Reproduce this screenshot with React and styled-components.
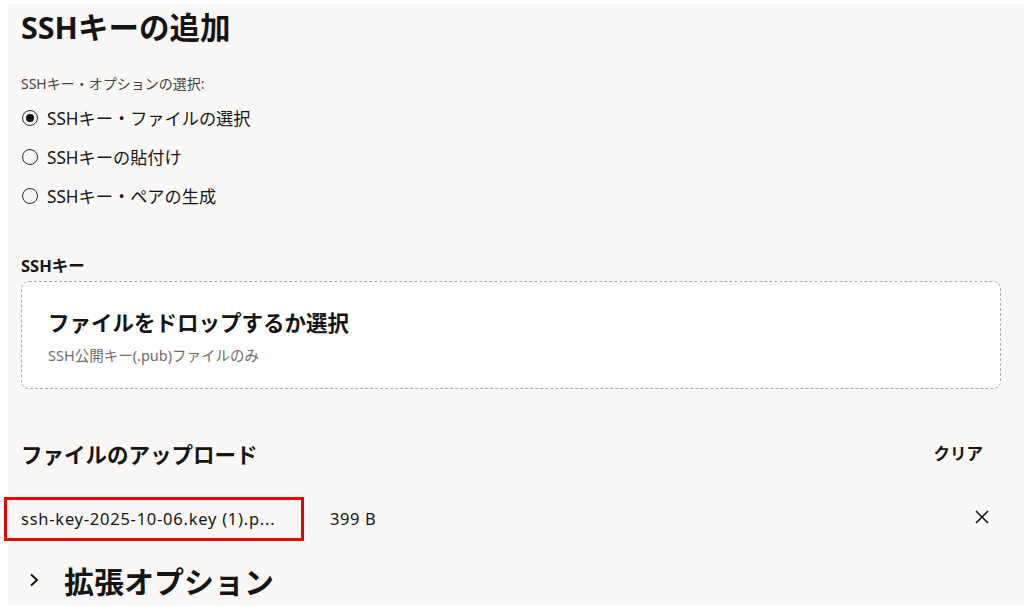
import React, { useState } from "react";
import styled, { createGlobalStyle } from "styled-components";

const GlobalStyle = createGlobalStyle`
  html, body {
    margin: 0;
    background: #ffffff;
  }
  body {
    font-family: "Noto Sans", "Noto Sans CJK JP", sans-serif;
    color: #161513;
  }
`;

const Page = styled.div`
  padding: 4px 0 6px 8px;
  background: #ffffff;
`;

const Panel = styled.div`
  background: #f9f8f6;
  padding: 4px 23px 6px 13px;
  display: flex;
  flex-direction: column;
`;

const Title = styled.h1`
  margin: 0;
  font-size: 30.5px;
  line-height: 38px;
  font-weight: 700;
`;

const FieldLabel = styled.div`
  margin-top: ${(p) => p.$top || 0}px;
  font-size: ${(p) => p.$size || 14}px;
  line-height: 20px;
  font-weight: ${(p) => (p.$bold ? 700 : 400)};
  color: ${(p) => (p.$bold ? "#161513" : "#46433f")};
`;

const RadioGroup = styled.div`
  margin-top: 4px;
  display: flex;
  flex-direction: column;
`;

const RadioRow = styled.label`
  height: 39px;
  display: flex;
  align-items: center;
  gap: 9px;
  padding-left: 1px;
  font-size: 17.2px;
  cursor: pointer;
`;

const RadioCircle = styled.span`
  width: 16px;
  height: 16px;
  box-sizing: border-box;
  border-radius: 50%;
  border: 1.5px solid #2c2a28;
  display: flex;
  align-items: center;
  justify-content: center;
  &::after {
    content: "";
    width: 8px;
    height: 8px;
    border-radius: 50%;
    background: ${(p) => (p.$checked ? "#161513" : "transparent")};
  }
`;

const DropZone = styled.div`
  margin-top: 5px;
  height: 108px;
  box-sizing: border-box;
  border: 1.5px dashed #aeaba7;
  border-radius: 8px;
  background: #ffffff;
  padding: 27px 0 0 26px;
`;

const DropTitle = styled.div`
  font-size: 21.5px;
  line-height: 28px;
  font-weight: 700;
`;

const DropHint = styled.div`
  margin-top: 8px;
  font-size: 14.5px;
  line-height: 20px;
  color: #6f6c68;
`;

const UploadHeader = styled.div`
  margin-top: 50px;
  height: 28px;
  display: flex;
  align-items: center;
  justify-content: space-between;
`;

const UploadTitle = styled.div`
  font-size: 21.5px;
  font-weight: 700;
`;

const ClearButton = styled.button`
  border: none;
  background: none;
  padding: 0;
  margin-right: 18px;
  font-family: inherit;
  font-size: 16.5px;
  font-weight: 700;
  color: #161513;
  cursor: pointer;
`;

const FileRow = styled.div`
  margin-top: 30px;
  height: 43px;
  display: flex;
  align-items: center;
`;

const FileName = styled.div`
  margin-left: -17px;
  width: 300px;
  height: 44px;
  box-sizing: border-box;
  border: 3px solid #ee0000;
  padding-left: 14px;
  display: flex;
  align-items: center;
  font-size: 16.5px;
  letter-spacing: 0.75px;
  white-space: nowrap;
`;

const FileSize = styled.div`
  margin-left: 26px;
  font-size: 16.5px;
  letter-spacing: 0.6px;
  flex: 1;
`;

const RemoveButton = styled.button`
  border: none;
  background: none;
  padding: 0;
  margin-right: 11px;
  margin-top: -4px;
  display: flex;
  cursor: pointer;
`;

const ExpandRow = styled.div`
  margin-top: 20px;
  height: 40px;
  display: flex;
  align-items: center;
  gap: 25px;
  padding-left: 8px;
`;

const ExpandTitle = styled.div`
  font-size: 30px;
  font-weight: 700;
`;

const options = [
  "SSHキー・ファイルの選択",
  "SSHキーの貼付け",
  "SSHキー・ペアの生成",
];

export default function App() {
  const [selected, setSelected] = useState(0);

  return (
    <>
      <GlobalStyle />
      <Page>
        <Panel>
          <Title>SSHキーの追加</Title>

          {/* Key option radios */}
          <FieldLabel $top={28}>SSHキー・オプションの選択:</FieldLabel>
          <RadioGroup>
            {options.map((o, i) => (
              <RadioRow key={o} onClick={() => setSelected(i)}>
                <RadioCircle $checked={selected === i} />
                {o}
              </RadioRow>
            ))}
          </RadioGroup>

          {/* Drop zone */}
          <FieldLabel $top={41} $size={16.5} $bold>SSHキー</FieldLabel>
          <DropZone>
            <DropTitle>ファイルをドロップするか選択</DropTitle>
            <DropHint>SSH公開キー(.pub)ファイルのみ</DropHint>
          </DropZone>

          {/* Uploaded files */}
          <UploadHeader>
            <UploadTitle>ファイルのアップロード</UploadTitle>
            <ClearButton>クリア</ClearButton>
          </UploadHeader>
          <FileRow>
            <FileName>ssh-key-2025-10-06.key (1).p...</FileName>
            <FileSize>399 B</FileSize>
            <RemoveButton>
              <svg width="16" height="16" viewBox="0 0 16 16">
                <path d="M2 2L14 14M14 2L2 14" stroke="#161513" strokeWidth="1.6" fill="none" />
              </svg>
            </RemoveButton>
          </FileRow>

          <ExpandRow>
            <svg width="10" height="14" viewBox="0 0 10 14">
              <path d="M2 1.5L8 7L2 12.5" stroke="#161513" strokeWidth="2" fill="none" />
            </svg>
            <ExpandTitle>拡張オプション</ExpandTitle>
          </ExpandRow>
        </Panel>
      </Page>
    </>
  );
}
